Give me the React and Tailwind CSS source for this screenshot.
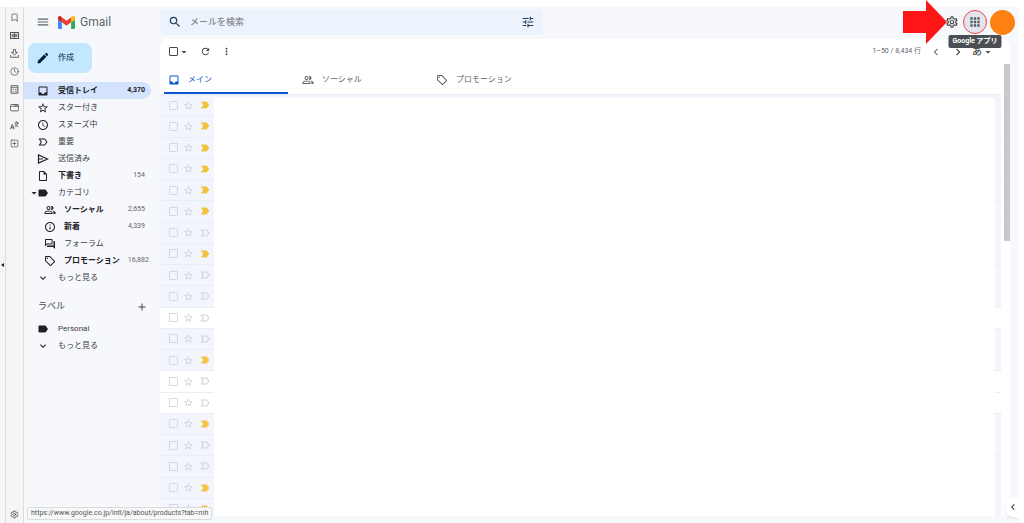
import { useState } from 'react';
import {
  Bookmark,
  Clock,
  Settings,
  SquarePlus
} from 'lucide-react';
import {
  MdAccessTime,
  MdAdd,
  MdApps,
  MdArrowDropDown,
  MdChevronLeft,
  MdChevronRight,
  MdEdit,
  MdExpandMore,
  MdInbox,
  MdInfoOutline,
  MdLabel,
  MdLabelImportant,
  MdLabelImportantOutline,
  MdMenu,
  MdMoreVert,
  MdOutlineForum,
  MdOutlineInsertDriveFile,
  MdOutlineLocalOffer,
  MdOutlinePeopleAlt,
  MdOutlineSettings,
  MdRefresh,
  MdSearch,
  MdStarOutline,
  MdTune
} from 'react-icons/md';

const StrokeIcon = ({ className, children }) => (
  <svg viewBox="0 0 24 24" className={className} fill="none" stroke="currentColor" strokeWidth="2" aria-hidden="true">
    {children}
  </svg>
);

const ReadingIcon = ({ className }) => (
  <StrokeIcon className={className}>
    <path d="M1 4h22v16H1z" strokeWidth="3" />
    <path d="M12 4v16M4 9h16M4 12h16M4 15h16" />
  </StrokeIcon>
);

const DownloadIcon = ({ className }) => (
  <StrokeIcon className={className}>
    <path d="M9 1h6v8h5l-8 7-8-7h5zM1 16v6h22v-6" strokeWidth="2.4" />
  </StrokeIcon>
);

const NoteIcon = ({ className }) => (
  <StrokeIcon className={className}>
    <path d="M3 2h18v20H3z" strokeWidth="2.6" />
    <path d="M3 7h18M7 12h3M13 12h5M7 17h3M13 17h5" />
  </StrokeIcon>
);

const WindowIcon = ({ className }) => (
  <StrokeIcon className={className}>
    <rect x="1" y="4" width="22" height="17" rx="3" strokeWidth="2.4" />
    <path d="M1 9h22M12 7h10" />
  </StrokeIcon>
);

const TranslateIcon = ({ className }) => (
  <StrokeIcon className={className}>
    <path d="M1 22l5-13 5 13M3 18h6M12 5h11M17 1v4M21 5c-1 5-4 8-8 10M14 8c1 3 4 6 8 7" strokeWidth="2.6" />
  </StrokeIcon>
);

const SendIcon = ({ className }) => (
  <StrokeIcon className={className}>
    <path d="M3 4v16l18-8zM3 12h9" strokeWidth="2.4" />
  </StrokeIcon>
);

const railItems = [
  { label: 'ブックマーク', icon: Bookmark },
  { label: 'リーディングリスト', icon: ReadingIcon },
  { label: 'ダウンロード', icon: DownloadIcon },
  { label: '履歴', icon: Clock },
  { label: 'メモ', icon: NoteIcon },
  { label: 'ウィンドウ', icon: WindowIcon },
  { label: '翻訳', icon: TranslateIcon },
  { label: 'パネルを追加', icon: SquarePlus }
];

const folders = [
  { label: '受信トレイ', icon: MdInbox, count: '4,370', active: true },
  { label: 'スター付き', icon: MdStarOutline },
  { label: 'スヌーズ中', icon: MdAccessTime },
  { label: '重要', icon: MdLabelImportantOutline },
  { label: '送信済み', icon: SendIcon },
  { label: '下書き', icon: MdOutlineInsertDriveFile, count: '154', bold: true },
  { label: 'カテゴリ', icon: MdLabel, expanded: true },
  { label: 'ソーシャル', icon: MdOutlinePeopleAlt, count: '2,655', bold: true, nested: true },
  { label: '新着', icon: MdInfoOutline, count: '4,339', bold: true, nested: true },
  { label: 'フォーラム', icon: MdOutlineForum, nested: true },
  { label: 'プロモーション', icon: MdOutlineLocalOffer, count: '16,882', bold: true, nested: true },
  { label: 'もっと見る', icon: MdExpandMore }
];

const labels = [
  { label: 'Personal', icon: MdLabel },
  { label: 'もっと見る', icon: MdExpandMore }
];

const tabs = [
  { label: 'メイン', icon: MdInbox },
  { label: 'ソーシャル', icon: MdOutlinePeopleAlt },
  { label: 'プロモーション', icon: MdOutlineLocalOffer }
];

// i = important, n = normal; upper case rows are unread
const mails = 'iiiiiininnNniNNinnii'.split('').map((c, id) => ({
  id,
  important: c.toLowerCase() === 'i',
  unread: c === 'N'
}));

const GmailLogo = () => (
  <svg viewBox="52 42 88 66" className="w-[17px] h-[13px]" aria-hidden="true">
    <path fill="#4285f4" d="M58 108h14V74L52 59v43c0 3.32 2.69 6 6 6" />
    <path fill="#34a853" d="M120 108h14c3.32 0 6-2.69 6-6V59l-20 15" />
    <path fill="#fbbc04" d="M120 48v26l20-15v-8c0-7.42-8.47-11.65-14.4-7.2" />
    <path fill="#ea4335" d="M72 74V48l24 18 24-18v26L96 92" />
    <path fill="#c5221f" d="M52 51v8l20 15V48l-5.6-4.2c-5.94-4.45-14.4-.22-14.4 7.2" />
  </svg>
);

const Rail = () => (
  <aside className="flex shrink-0 bg-[#f5f5f5]">
    <button aria-label="パネルを閉じる" className="w-[5px] flex items-center justify-center">
      <svg viewBox="0 0 3 4" className="w-[3px] h-1"><path d="M3 0v4L0 2z" fill="#222" /></svg>
    </button>
    <div className="w-[19px] border-x border-[#dcdcdc] flex flex-col items-center pt-[1px] pb-1">
      {railItems.map(({ label, icon: Icon }) => (
        <button key={label} aria-label={label} className="h-[18px] flex items-center">
          <Icon className="w-[9px] h-[9px] text-[#555]" />
        </button>
      ))}
      <button aria-label="設定" className="mt-auto">
        <Settings className="w-[9px] h-[9px] text-[#444]" />
      </button>
    </div>
  </aside>
);

const NavItem = ({ item }) => {
  const { label, icon: Icon, count, active, bold, nested, expanded } = item;
  return (
    <a
      href="#"
      className={`relative h-[17px] flex items-center pr-[6px] mr-[9px] rounded-r-full text-[#202124] ${
        nested ? 'pl-5 gap-2' : 'pl-[13px] gap-[9px]'
      } ${active ? 'bg-[#d3e3fd]' : ''}`}
    >
      {expanded && <MdArrowDropDown className="absolute left-1 w-3 h-3" />}
      <Icon className="w-3 h-3 shrink-0" />
      <span className={`flex-1 whitespace-nowrap ${active || bold ? 'font-bold' : 'text-[#3c4043]'}`}>{label}</span>
      {count && (
        <span className={`text-[7px] ${active ? 'font-bold' : 'text-[#5f6368]'}`}>{count}</span>
      )}
    </a>
  );
};

const Sidebar = () => (
  <nav className="w-[136px] shrink-0 pt-1">
    <button className="ml-1 h-[30px] w-16 rounded-lg bg-[#c2e7ff] flex items-center gap-2 pl-2 text-[#001d35]">
      <MdEdit className="w-[14px] h-[14px]" />
      作成
    </button>
    <div className="mt-[9px] flex flex-col">
      {folders.map((item) => (
        <NavItem key={item.label} item={item} />
      ))}
    </div>
    <div className="mt-3 h-[18px] flex items-center justify-between pl-[14px] pr-3 text-[#444746]">
      <h2 className="text-[9px]">ラベル</h2>
      <button aria-label="新しいラベルを作成">
        <MdAdd className="w-3 h-3" />
      </button>
    </div>
    <div className="mt-1 flex flex-col">
      {labels.map((item) => (
        <NavItem key={item.label} item={item} />
      ))}
    </div>
  </nav>
);

const Header = () => (
  <header className="h-8 shrink-0 flex items-center">
    <div className="w-[136px] shrink-0 flex items-center pl-3 pb-[2px]">
      <button aria-label="メインメニュー" className="text-[#5f6368]">
        <MdMenu className="w-[14px] h-[14px]" />
      </button>
      <a href="#" className="ml-2 flex items-center gap-[5px] text-xs text-[#5f6368]">
        <GmailLogo />
        Gmail
      </a>
    </div>
    <form className="w-[383px] h-[26px] mb-[2px] rounded bg-[#edf3fc] flex items-center px-2 gap-2 text-[#1f3b57]">
      <button type="button" aria-label="検索">
        <MdSearch className="w-[14px] h-[14px]" />
      </button>
      <input
        type="text"
        aria-label="メールを検索"
        placeholder="メールを検索"
        className="flex-1 min-w-0 pt-[2px] text-[9px] bg-transparent outline-none placeholder:text-[#6b7075]"
      />
      <button type="button" aria-label="検索オプション">
        <MdTune className="w-[14px] h-[14px]" />
      </button>
    </form>
    <div className="ml-auto mb-[2px] flex items-center pr-1">
      <div className="relative mr-1">
        <svg viewBox="0 0 44 44" className="absolute right-3 -top-[15px] w-11 h-11" aria-hidden="true">
          <path d="M0 11h23V0l21 22-21 22V33H0z" fill="#fe1616" />
        </svg>
        <button aria-label="設定" className="block text-[#444746]">
          <MdOutlineSettings className="w-[14px] h-[14px]" />
        </button>
      </div>
      <div className="relative mr-[3px]">
        <button
          aria-label="Google アプリ"
          className="w-6 h-6 rounded-full border border-[#f2464c] bg-[#e2e6ec] flex items-center justify-center text-[#555a60]"
        >
          <MdApps className="w-[14px] h-[14px]" />
        </button>
        <div
          role="tooltip"
          className="absolute z-10 top-[25px] left-1/2 -translate-x-1/2 h-[13px] px-1 rounded-[2px] bg-[#4b4f54] text-white text-[7px] leading-[13px] font-bold whitespace-nowrap"
        >
          Google アプリ
        </div>
      </div>
      <button aria-label="アカウント" className="w-[25px] h-[25px] rounded-full bg-[#fd8013]"></button>
    </div>
  </header>
);

const Toolbar = () => (
  <div className="h-[25px] shrink-0 flex items-center pl-[9px] pr-4 text-[#444746]">
    <input type="checkbox" aria-label="すべて選択" className="appearance-none w-[9px] h-[9px] rounded-[1px] border border-[#444746]" />
    <button aria-label="選択">
      <MdArrowDropDown className="w-3 h-3" />
    </button>
    <button aria-label="更新" className="ml-[10px]">
      <MdRefresh className="w-[11px] h-[11px]" />
    </button>
    <button aria-label="その他" className="ml-[10px]">
      <MdMoreVert className="w-[11px] h-[11px]" />
    </button>
    <span className="ml-auto text-[7px] text-[#5f6368]">1–50 / 8,434 行</span>
    <button aria-label="前へ" className="ml-2 text-[#777]">
      <MdChevronLeft className="w-[14px] h-[14px]" />
    </button>
    <button aria-label="次へ" className="ml-2">
      <MdChevronRight className="w-[14px] h-[14px]" />
    </button>
    <button aria-label="入力ツール" className="ml-[7px] flex items-center text-[10px] font-medium">
      あ
      <MdArrowDropDown className="w-3 h-3" />
    </button>
  </div>
);

const MailRow = ({ mail }) => (
  <li
    className={`flex items-center pl-[9px] gap-[5px] border-t border-[#e9edf4] ${
      mail.unread ? 'bg-white' : 'bg-[#f2f6fc]'
    }`}
  >
    <input type="checkbox" aria-label="選択" className="appearance-none w-[9px] h-[9px] rounded-[1px] border border-[#d5d8dd]" />
    <button aria-label="スター" className="text-[#cfd2d6]">
      <MdStarOutline className="w-[11px] h-[11px]" />
    </button>
    <button aria-label="重要" className={mail.important ? 'text-[#f4c143]' : 'text-[#cfd2d6]'}>
      {mail.important ? (
        <MdLabelImportant className="w-3 h-3" />
      ) : (
        <MdLabelImportantOutline className="w-3 h-3" />
      )}
    </button>
  </li>
);

const MailPanel = () => {
  const [activeTab, setActiveTab] = useState('メイン');

  return (
    <main className="flex-1 min-w-0 mr-[9px] mb-[7px] rounded-t-lg bg-white flex flex-col overflow-hidden">
      <Toolbar />
      <div className="flex-1 min-h-0 flex">
        <div className="flex-1 min-w-0 flex flex-col">
          {/* Category tabs */}
          <div role="tablist" className="h-[30px] shrink-0 flex">
            {tabs.map(({ label, icon: Icon }) => (
              <button
                key={label}
                role="tab"
                aria-selected={activeTab === label}
                onClick={() => setActiveTab(label)}
                className={`w-[134px] px-1 ${activeTab === label ? 'text-[#0b57d0]' : 'text-[#5f6368]'}`}
              >
                <span
                  className={`mr-[2px] h-full flex items-center gap-2 pl-1 pt-[3px] border-b-2 ${
                    activeTab === label ? 'border-[#0b57d0]' : 'border-transparent'
                  }`}
                >
                  <Icon className="w-3 h-3" />
                  {label}
                </span>
              </button>
            ))}
          </div>

          {/* Mail list, message text is masked */}
          <div className="relative flex-1 min-h-0 overflow-hidden">
            <ul className="grid auto-rows-fr h-[425px]">
              {mails.map((mail) => (
                <MailRow key={mail.id} mail={mail} />
              ))}
            </ul>
            <div className="absolute top-1 bottom-0 left-[54px] right-[6px] bg-white"></div>
          </div>
        </div>
        <div className="w-[9px] shrink-0 flex justify-end">
          <div className="w-[6px] h-[177px] bg-[#c9c9c9]"></div>
        </div>
      </div>
    </main>
  );
};

const App = () => {
  return (
    <div className="h-screen bg-white pt-[7px] pr-[5px] text-[8px] font-[Roboto,'Noto_Sans_CJK_JP',sans-serif]">
      <div className="relative h-full flex bg-[#f6f8fc]">
        <Rail />
        <div className="flex-1 min-w-0 flex flex-col">
          <Header />
          <div className="flex-1 min-h-0 flex">
            <Sidebar />
            <MailPanel />
          </div>
        </div>

        {/* Side panel toggle */}
        <div className="absolute right-0 bottom-1 w-4 h-6 flex items-center overflow-hidden">
          <button
            aria-label="サイドパネルを表示"
            className="ml-[2px] w-[21px] h-[21px] shrink-0 rounded-full bg-white shadow flex items-center pl-[2px] text-[#333]"
          >
            <MdChevronLeft className="w-3 h-3" />
          </button>
        </div>

        {/* Link preview */}
        <div className="absolute left-[27px] bottom-[3px] h-[13px] px-[3px] rounded-[2px] border border-[#dadce0] bg-[#f7f8f8] text-[#555] text-[7px] leading-[11px]">
          https://www.google.co.jp/intl/ja/about/products?tab=mh
        </div>
      </div>
    </div>
  );
};

export default App;
